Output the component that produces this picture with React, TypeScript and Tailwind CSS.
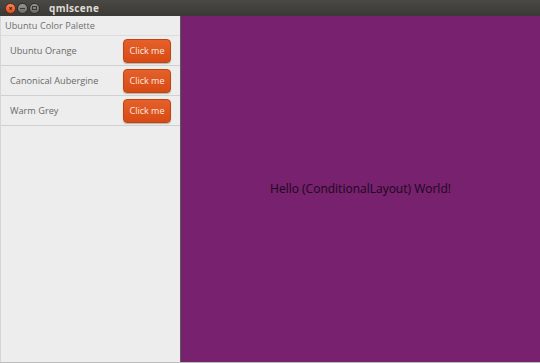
import React from 'react';

const palette = ['Ubuntu Orange', 'Canonical Aubergine', 'Warm Grey'];

function TitleBar() {
  return (
    <div className="flex items-center h-4 bg-gradient-to-b from-[#4a4945] to-[#3a3935] pl-[5px]">
      <div className="flex items-center gap-[1px]">
        <div className="w-[11px] h-[11px] rounded-full bg-gradient-to-b from-[#f58a5c] to-[#df4a16] border border-[#6b2a10] flex items-center justify-center text-[7px] leading-none text-[#3a1508] font-bold">
          ×
        </div>
        <div className="w-[11px] h-[11px] rounded-full bg-gradient-to-b from-[#9a9892] to-[#6a6964] border border-[#2e2d2a] flex items-center justify-center">
          <div className="w-[5px] h-[1px] bg-[#3a3935]" />
        </div>
        <div className="w-[11px] h-[11px] rounded-full bg-gradient-to-b from-[#9a9892] to-[#6a6964] border border-[#2e2d2a] flex items-center justify-center">
          <div className="w-[5px] h-[4px] border border-[#3a3935]" />
        </div>
      </div>
      <span className="ml-[9px] text-[10px] font-bold text-[#dfdbd2] leading-none tracking-[0.3px]">qmlscene</span>
    </div>
  );
}

function Sidebar() {
  return (
    <aside className="w-[181px] shrink-0 bg-[#ededed] border-l border-[#d6d6d6] border-r border-r-[#5a5a5a] flex flex-col">
      <div className="h-5 flex items-center px-[4px] text-[9.2px] text-[#6f6f6f] border-b border-[#dcdcdc]">
        Ubuntu Color Palette
      </div>
      {palette.map((name) => (
        <div key={name} className="h-[30px] flex items-center justify-between pl-[9px] pr-[9px] border-b border-[#d0d0d0]">
          <span className="text-[9.2px] text-[#6a6a6a]">{name}</span>
          <button className="w-12 h-6 rounded-[4px] bg-gradient-to-b from-[#e5602a] to-[#d84a12] border border-[#c0440f] text-[#fbe9e0] text-[9px] shadow-[0_1px_1px_rgba(0,0,0,0.25)]">
            Click me
          </button>
        </div>
      ))}
      <div className="flex-1" />
    </aside>
  );
}

export default function App() {
  return (
    <div className="w-[540px] h-[363px] flex flex-col bg-[#77216f] font-['Open_Sans','Liberation_Sans',sans-serif] overflow-hidden">
      <TitleBar />
      <div className="flex flex-1 min-h-0 border-b border-[#bdbdbd]">
        <Sidebar />
        <main className="flex-1 flex items-center justify-center bg-[#77216f]">
          <span className="text-[12px] text-[#1a0818]">Hello (ConditionalLayout) World!</span>
        </main>
      </div>
    </div>
  );
}
